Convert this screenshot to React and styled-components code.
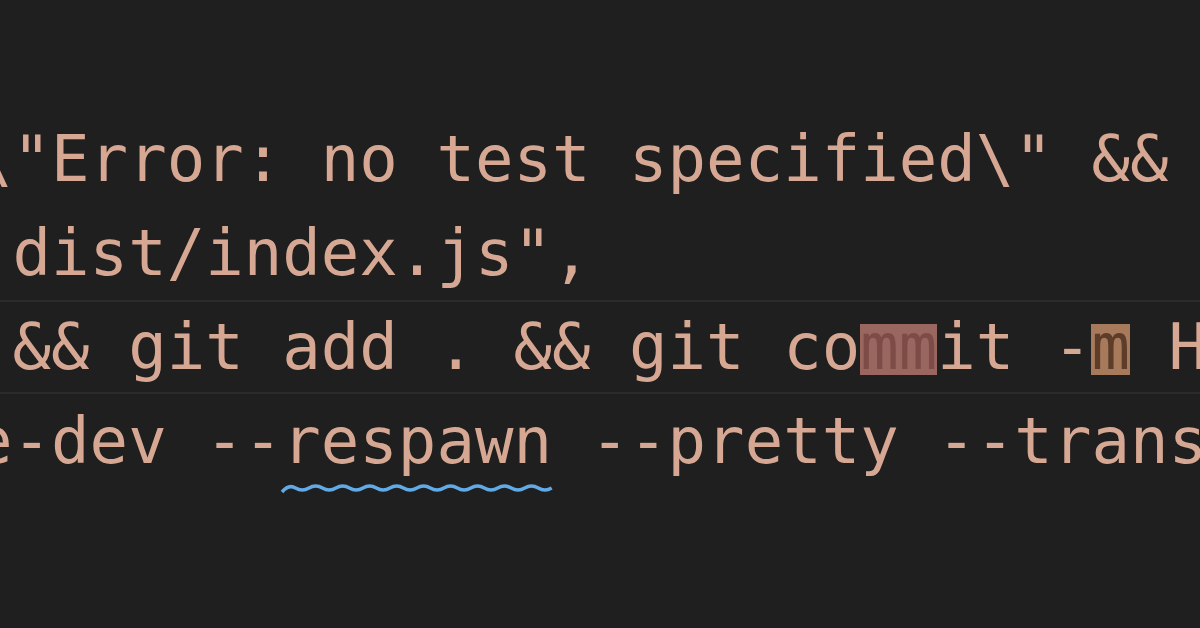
import React from "react";
import styled, { createGlobalStyle } from "styled-components";

const Global = createGlobalStyle`
  html, body { margin: 0; padding: 0; background: #1f1f1f; }
  body { width: 1200px; height: 628px; overflow: hidden; }
`;

const Editor = styled.div`
  width: 1200px;
  height: 628px;
  background: #1f1f1f;
  overflow: hidden;
  padding-top: 112px;
  box-sizing: border-box;
`;

const Lines = styled.div`
  display: flex;
  flex-direction: column;
  margin-left: -26px;
`;

const Line = styled.div`
  height: 94px;
  line-height: 94px;
  white-space: pre;
  box-sizing: border-box;
  font-family: "DejaVu Sans Mono", monospace;
  font-size: 64px;
  color: #d6a893;
  ${(p) =>
    p.$current &&
    `
    border-top: 2px solid #2b2b2b;
    border-bottom: 2px solid #2b2b2b;
    line-height: 90px;
  `}
`;

const Match = styled.span`
  display: inline-block;
  line-height: 46px;
  padding-bottom: 5px;
  background: ${(p) => (p.$strong ? "#a87a5c" : "#9a6660")};
  color: ${(p) => (p.$strong ? "#5e3c2a" : "#7e4c46")};
`;

const Squiggled = styled.span`
  position: relative;
  display: inline-block;
`;

const Squiggle = styled.svg`
  position: absolute;
  left: 0;
  bottom: -7px;
  width: 100%;
  height: 12px;
  overflow: visible;
`;

function Wave() {
  const w = 270;
  const step = 13.5;
  let d = `M0 9`;
  for (let x = 0; x < w; x += step * 2) {
    d += ` Q${x + step / 2} 1 ${x + step} 5 T${x + step * 2} 5`;
  }
  return (
    <Squiggle viewBox="0 0 270 12" preserveAspectRatio="none">
      <path d={d} fill="none" stroke="#62aae6" strokeWidth="3.5" />
    </Squiggle>
  );
}

export default function App() {
  return (
    <>
      <Global />
      <Editor>
        <Lines>
          <Line>{'\\"Error: no test specified\\" && exit 1",'}</Line>
          <Line>{' dist/index.js",'}</Line>
          <Line $current>
            {' && git add . && git co'}
            <Match>mm</Match>
            {'it -'}
            <Match $strong>m</Match>
            {' H'}
          </Line>
          <Line>
            {'e-dev --'}
            <Squiggled>
              respawn
              <Wave />
            </Squiggled>
            {' --pretty --transpile-only src/index.ts",'}
          </Line>
        </Lines>
      </Editor>
    </>
  );
}
